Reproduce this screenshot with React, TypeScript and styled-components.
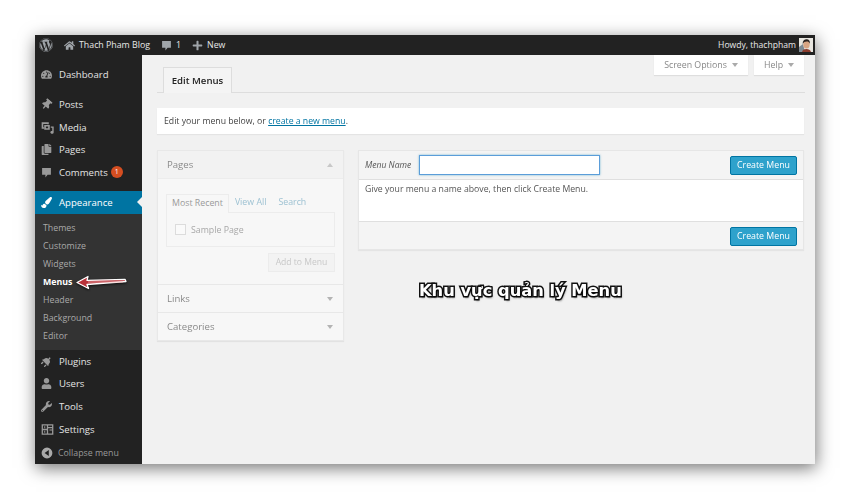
import React from 'react'
import styled, { createGlobalStyle } from 'styled-components'
import {
  FaWordpress,
  FaHome,
  FaPlus,
  FaTachometerAlt,
  FaThumbtack,
  FaCopy,
  FaPaintBrush,
  FaPlug,
  FaUser,
  FaWrench,
} from 'react-icons/fa'

const GlobalStyle = createGlobalStyle`
  html, body {
    margin: 0;
    padding: 0;
    background: #ffffff;
  }
  body {
    font-family: "Open Sans", "Liberation Sans", sans-serif;
    color: #444;
  }
  * {
    box-sizing: border-box;
  }
`

const TiltedPin = styled(FaThumbtack)`
  transform: rotate(40deg);
`

const TiltedPlug = styled(FaPlug)`
  transform: rotate(-135deg);
`

const BubbleIcon = () => (
  <svg viewBox="0 0 20 20" width="1em" height="1em" fill="currentColor">
    <path d="M2 2h16v12h-6l-4 5v-5H2z" />
  </svg>
)

const MediaIcon = () => (
  <svg viewBox="0 0 20 20" width="13" height="13" fill="currentColor">
    <path d="M1 2h11v3h-2.500V4.500h-6v5H5V12H1z" />
    <path d="M5 6h8.500v7.500H5zM7.500 8.500v2.500H11V8.500z" />
    <path d="M15 8.500h4.500v8.800c0 1.500-1.200 2.400-2.500 2.400s-2.700-.9-2.700-2.300 1.300-2.400 3-2.100v-4.800H15z" />
  </svg>
)

const SettingsIcon = () => (
  <svg viewBox="0 0 20 20" width="13" height="13" fill="currentColor">
    <path d="M1 2h18v16H1zM3 4v5h6V4zm8 0v2h6V4zm0 4v8h6V8zM3 11v5h6v-5z" />
    <path d="M5 5h1.500v3H5zM13 10h4v1.500h-4zM5 12h1.500v3H5z" />
  </svg>
)

const CollapseIcon = () => (
  <svg viewBox="0 0 20 20" width="12" height="12" fill="currentColor">
    <path d="M10 1a9 9 0 1 0 0 18 9 9 0 0 0 0-18zm3 4v10l-7-5z" fillRule="evenodd" />
  </svg>
)

const Avatar = () => (
  <svg viewBox="0 0 14 14" width="14" height="14">
    <rect width="14" height="14" fill="#e8e6e0" />
    <path d="M0 14V9l4-3 2 8z" fill="#7d8a94" />
    <ellipse cx="7.500" cy="6.500" rx="3.200" ry="4" fill="#d9a583" />
    <path d="M3.800 6c-.4-3.500 2-4.800 4-4.800s3.500 1.500 3 4.500c-.6-1.600-1.500-2.200-3.200-2.200S4.400 4.300 3.800 6z" fill="#2b2320" />
    <path d="M3 14c.6-2.400 2.400-3 4.500-3s3.800.8 4.500 3z" fill="#8a3b2c" />
  </svg>
)

const MenusArrow = () => (
  <svg viewBox="0 0 52 16" width="52" height="16">
    <path
      d="M1 8.500 12 2.500 11 6.300 49 5.300 50 7.500 11 10.500 12.500 14.500z"
      fill="#b8323a"
      stroke="#ffffff"
      strokeWidth="1.300"
      strokeLinejoin="round"
    />
    <path d="M12 8H47" stroke="#eeb0b0" strokeWidth="0.800" />
  </svg>
)

const primaryItems = [
  { label: 'Posts', icon: <TiltedPin /> },
  { label: 'Media', icon: <MediaIcon /> },
  { label: 'Pages', icon: <FaCopy /> },
  { label: 'Comments', icon: <BubbleIcon />, badge: '1' },
]

const subItems = ['Themes', 'Customize', 'Widgets', 'Menus', 'Header', 'Background', 'Editor']

const lowerItems = [
  { label: 'Plugins', icon: <TiltedPlug /> },
  { label: 'Users', icon: <FaUser /> },
  { label: 'Tools', icon: <FaWrench /> },
  { label: 'Settings', icon: <SettingsIcon /> },
]

const App = () => {
  return (
    <Page>
      <GlobalStyle />
      <Frame>
        <AdminBar>
          <BarLogo><FaWordpress /></BarLogo>
          <BarItem><FaHome /> Thach Pham Blog</BarItem>
          <BarItem><BubbleIcon /> 1</BarItem>
          <BarItem><FaPlus /> New</BarItem>
          <Howdy>Howdy, thachpham <Avatar /></Howdy>
        </AdminBar>
        <Body>
          <Sidebar>
            <MenuItem>
              <MenuIcon><FaTachometerAlt /></MenuIcon>Dashboard
            </MenuItem>
            <MenuGap />
            {primaryItems.map((item) => (
              <MenuItem key={item.label}>
                <MenuIcon>{item.icon}</MenuIcon>
                {item.label}
                {item.badge && <Badge>{item.badge}</Badge>}
              </MenuItem>
            ))}
            <MenuGap />
            <MenuItem $active>
              <MenuIcon><FaPaintBrush /></MenuIcon>Appearance
              <ActiveNotch />
            </MenuItem>
            <SubMenu>
              {subItems.map((item) => (
                <SubItem key={item} $current={item === 'Menus'}>
                  {item}
                  {item === 'Menus' && (
                    <ArrowMark>
                      <MenusArrow />
                    </ArrowMark>
                  )}
                </SubItem>
              ))}
            </SubMenu>
            {lowerItems.map((item) => (
              <MenuItem key={item.label}>
                <MenuIcon>{item.icon}</MenuIcon>
                {item.label}
              </MenuItem>
            ))}
            <Collapse>
              <CollapseIcon /> Collapse menu
            </Collapse>
          </Sidebar>
          <Main>
            <TopRow>
              <TabTitle>Edit Menus</TabTitle>
              <ScreenMeta>
                <MetaLink $width={94}>Screen Options <Caret /></MetaLink>
                <MetaLink $width={50}>Help <Caret /></MetaLink>
              </ScreenMeta>
            </TopRow>
            <Notice>
              Edit your menu below, or <a href="#new">create a new menu</a>.
            </Notice>
            <Columns>
              <SidePanel>
                <PagesHead>
                  Pages <PanelCaret $up />
                </PagesHead>
                <PagesBody>
                  <InnerTabs>
                    <InnerTab $active>Most Recent</InnerTab>
                    <InnerTab>View All</InnerTab>
                    <InnerTab>Search</InnerTab>
                  </InnerTabs>
                  <TabBox>
                    <FakeCheck />
                    Sample Page
                  </TabBox>
                  <AddRow>
                    <AddButton>Add to Menu</AddButton>
                  </AddRow>
                </PagesBody>
                <PanelRow>
                  Links <PanelCaret />
                </PanelRow>
                <PanelRow>
                  Categories <PanelCaret />
                </PanelRow>
              </SidePanel>
              <EditPanel>
                <EditHead>
                  <NameLabel>Menu Name</NameLabel>
                  <NameInput />
                  <PrimaryButton>Create Menu</PrimaryButton>
                </EditHead>
                <EditBody>Give your menu a name above, then click Create Menu.</EditBody>
                <EditFoot>
                  <PrimaryButton>Create Menu</PrimaryButton>
                </EditFoot>
              </EditPanel>
            </Columns>
            <Caption>Khu vực quản lý Menu</Caption>
          </Main>
        </Body>
      </Frame>
    </Page>
  )
}

export default App

const Page = styled.div`
  width: 850px;
  height: 499px;
  padding: 35px;
  overflow: hidden;
  background: #ffffff;
`

const Frame = styled.div`
  width: 780px;
  height: 429px;
  display: flex;
  flex-direction: column;
  background: #f1f1f1;
  box-shadow: 1px 4px 16px rgba(0, 0, 0, 0.55);
  filter: blur(0.35px);
`

const AdminBar = styled.div`
  height: 20px;
  flex: none;
  display: flex;
  align-items: center;
  padding: 0 2px 0 4px;
  background: #222222;
  color: #e8e8e8;
  font-size: 8.8px;
`

const BarLogo = styled.span`
  display: flex;
  font-size: 14px;
  color: #a0a5aa;
  margin-right: 11px;
`

const BarItem = styled.span`
  display: flex;
  align-items: center;
  gap: 4px;
  margin-right: 11px;
  white-space: nowrap;

  svg {
    font-size: 11px;
    color: #a0a5aa;
  }
`

const Howdy = styled.span`
  margin-left: auto;
  display: flex;
  align-items: center;
  gap: 3px;
  font-size: 8.6px;
`

const Body = styled.div`
  flex: 1;
  display: flex;
  min-height: 0;
`

const Sidebar = styled.nav`
  width: 107px;
  flex: none;
  padding-top: 8px;
  background: #222222;
  color: #eeeeee;
`

const MenuItem = styled.div<{ $active?: boolean }>`
  position: relative;
  height: 22.7px;
  display: flex;
  align-items: center;
  font-size: 9.6px;
  background: ${(p) => (p.$active ? '#0074a2' : 'transparent')};
  color: ${(p) => (p.$active ? '#ffffff' : '#e4e4e4')};

  svg {
    color: ${(p) => (p.$active ? '#ffffff' : '#999999')};
  }
`

const MenuIcon = styled.span`
  width: 24px;
  padding-left: 6px;
  flex: none;
  display: flex;
  font-size: 11px;
`

const MenuGap = styled.div`
  height: 7.3px;
`

const Badge = styled.span`
  width: 12px;
  height: 12px;
  margin-left: 3px;
  border-radius: 50%;
  background: #d54e21;
  color: #ffffff;
  font-size: 7px;
  line-height: 12px;
  text-align: center;
`

const ActiveNotch = styled.span`
  position: absolute;
  right: 0;
  top: 6px;
  border: 5px solid transparent;
  border-right-color: #f1f1f1;
`

const SubMenu = styled.div`
  height: 136px;
  padding: 5px 0 0 8px;
  background: #333333;
`

const SubItem = styled.div<{ $current?: boolean }>`
  position: relative;
  height: 18px;
  line-height: 18px;
  font-size: 8.8px;
  font-weight: ${(p) => (p.$current ? 700 : 400)};
  color: ${(p) => (p.$current ? '#ffffff' : '#a9a9a9')};
`

const ArrowMark = styled.span`
  position: absolute;
  left: 33px;
  top: 1px;
  display: flex;
  filter: drop-shadow(0 1px 1px rgba(0, 0, 0, 0.7));
`

const Collapse = styled.div`
  height: 25px;
  padding-left: 6px;
  display: flex;
  align-items: center;
  gap: 5px;
  font-size: 8.8px;
  color: #999999;

  svg {
    color: #aaaaaa;
  }
`

const Main = styled.main`
  position: relative;
  flex: 1;
  padding: 0 10px 0 15px;
`

const TopRow = styled.div`
  height: 38px;
  display: flex;
  justify-content: space-between;
  align-items: flex-start;
  border-bottom: 1px solid #dddddd;
`

const TabTitle = styled.div`
  width: 69px;
  height: 26px;
  margin: 12px 0 0 6px;
  background: #f4f4f4;
  border: 1px solid #dddddd;
  border-bottom: none;
  color: #222222;
  font-size: 9.6px;
  font-weight: 600;
  line-height: 25px;
  text-align: center;
`

const ScreenMeta = styled.div`
  display: flex;
  gap: 6px;
  margin-right: 1px;
`

const MetaLink = styled.div<{ $width: number }>`
  width: ${(p) => p.$width}px;
  height: 20px;
  display: flex;
  align-items: center;
  justify-content: center;
  gap: 5px;
  background: #ffffff;
  box-shadow: 0 1px 1px rgba(0, 0, 0, 0.08);
  color: #888888;
  font-size: 8.8px;
`

const Caret = styled.span`
  border: 3px solid transparent;
  border-top: 4px solid #aaaaaa;
  border-bottom: none;
`

const Notice = styled.div`
  height: 26px;
  margin-top: 15px;
  margin-right: 1px;
  padding-left: 7px;
  background: #ffffff;
  box-shadow: 0 1px 1px rgba(0, 0, 0, 0.05);
  font-size: 8.7px;
  line-height: 26px;
  color: #444444;

  a {
    color: #0074a2;
  }
`

const Columns = styled.div`
  display: flex;
  align-items: flex-start;
  gap: 14px;
  margin-top: 16px;
  margin-right: 1px;
`

const SidePanel = styled.section`
  width: 187px;
  flex: none;
  background: #f7f7f7;
  border: 1px solid #e8e8e8;
  box-shadow: 0 1px 1px rgba(0, 0, 0, 0.06);
  color: #999999;
`

const PanelRow = styled.div`
  height: 28px;
  padding: 0 9px;
  display: flex;
  align-items: center;
  justify-content: space-between;
  border-top: 1px solid #e8e8e8;
  font-size: 9.6px;
  color: #8a8a8a;
`

const PagesHead = styled(PanelRow)`
  height: 27px;
  border-top: none;
  background: #f2f2f2;
`

const PanelCaret = styled.span<{ $up?: boolean }>`
  margin-right: 1px;
  border: 3px solid transparent;
  ${(p) => (p.$up ? 'border-bottom: 4px solid #c8c8c8; border-top: none;' : 'border-top: 4px solid #b4b4b4; border-bottom: none;')}
`

const PagesBody = styled.div`
  height: 106px;
  padding: 15px 8px 0;
  border-top: 1px solid #ececec;
`

const InnerTabs = styled.div`
  height: 18px;
  display: flex;
  font-size: 8.8px;
`

const InnerTab = styled.span<{ $active?: boolean }>`
  height: ${(p) => (p.$active ? 19 : 18)}px;
  line-height: 17px;
  padding: 0 ${(p) => (p.$active ? '5px' : '6px')};
  position: relative;
  z-index: 1;
  color: ${(p) => (p.$active ? '#9a9a9a' : '#9cc1d2')};
  ${(p) => p.$active && `
    border: 1px solid #ececec;
    border-bottom: none;
    background: #f7f7f7;
  `}
`

const TabBox = styled.div`
  height: 35px;
  padding-left: 8px;
  display: flex;
  align-items: center;
  gap: 5px;
  border: 1px solid #ececec;
  font-size: 8.8px;
  color: #a8a8a8;
`

const FakeCheck = styled.span`
  width: 11px;
  height: 11px;
  background: #fafafa;
  border: 1px solid #dcdcdc;
`

const AddRow = styled.div`
  display: flex;
  justify-content: flex-end;
  margin-top: 6px;
`

const AddButton = styled.div`
  width: 67px;
  height: 19px;
  background: #f3f3f3;
  border: 1px solid #ececec;
  color: #c8c8c8;
  font-size: 8.6px;
  line-height: 17px;
  text-align: center;
`

const EditPanel = styled.section`
  flex: 1;
  border: 1px solid #e6e6e6;
  box-shadow: 0 1px 1px rgba(0, 0, 0, 0.05);
`

const EditHead = styled.div`
  height: 29px;
  padding: 0 6px;
  display: flex;
  align-items: center;
  background: #f4f4f4;
  border-bottom: 1px solid #dfdfdf;
`

const NameLabel = styled.span`
  width: 54px;
  flex: none;
  font-size: 8.6px;
  font-style: italic;
  color: #555555;
`

const NameInput = styled.input`
  width: 181px;
  height: 20px;
  border: 1px solid #5b9dd9;
  background: #ffffff;
  box-shadow: 0 0 2px rgba(30, 140, 190, 0.6);
  outline: none;
`

const PrimaryButton = styled.div`
  width: 67px;
  height: 19px;
  margin-left: auto;
  background: #2ea2cc;
  border: 1px solid #0074a2;
  border-radius: 2px;
  color: #ffffff;
  font-size: 8.8px;
  line-height: 17px;
  text-align: center;
`

const EditBody = styled.div`
  height: 41px;
  padding: 3px 6px 0;
  background: #ffffff;
  font-size: 8.7px;
  line-height: 12px;
  color: #555555;
`

const EditFoot = styled.div`
  height: 28px;
  padding: 1px 6px 0;
  display: flex;
  align-items: center;
  background: #f4f4f4;
  border-top: 1px solid #dfdfdf;
`

const Caption = styled.div`
  position: absolute;
  left: 277px;
  top: 226px;
  color: #ffffff;
  font-family: "DejaVu Sans", "Liberation Sans", sans-serif;
  font-size: 16.3px;
  font-weight: 700;
  white-space: nowrap;
  -webkit-text-stroke: 3px #111111;
  paint-order: stroke fill;
  text-shadow: 1px 2px 2px rgba(0, 0, 0, 0.5);
`
